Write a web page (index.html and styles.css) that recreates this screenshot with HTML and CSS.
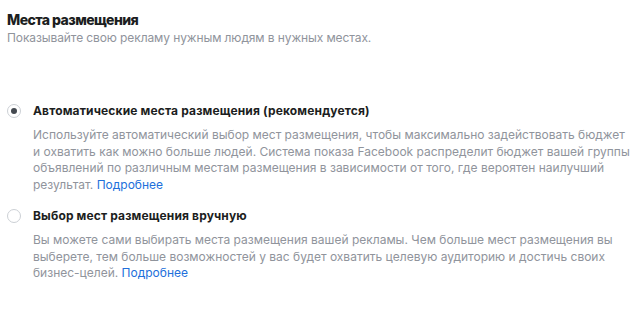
FILE: index.html
```html
<!DOCTYPE html>
<html lang="ru">
<head>
<meta charset="utf-8">
<link rel="stylesheet" href="styles.css">
</head>
<body>
<section class="placements">
  <header class="head">
    <div class="title">Места размещения</div>
    <p class="subtitle">Показывайте свою рекламу нужным людям в нужных местах.</p>
  </header>
  <div class="options">
    <div class="option">
      <div class="option-row">
        <span class="radio checked"></span>
        <span class="option-title">Автоматические места размещения (рекомендуется)</span>
      </div>
      <p class="desc">Используйте автоматический выбор мест размещения, чтобы максимально задействовать бюджет и охватить как можно больше людей. Система показа Facebook распределит бюджет вашей группы объявлений по различным местам размещения в зависимости от того, где вероятен наилучший результат. <a class="link" href="#">Подробнее</a></p>
    </div>
    <div class="option">
      <div class="option-row">
        <span class="radio"></span>
        <span class="option-title">Выбор мест размещения вручную</span>
      </div>
      <p class="desc">Вы можете сами выбирать места размещения вашей рекламы. Чем больше мест размещения вы выберете, тем больше возможностей у вас будет охватить целевую аудиторию и достичь своих бизнес-целей. <a class="link" href="#">Подробнее</a></p>
    </div>
  </div>
</section>
</body>
</html>
```
FILE: styles.css
```css
* { box-sizing: border-box; }
html, body { margin: 0; padding: 0; background: #fff; }
body {
  font-family: Inter, "Liberation Sans", Arial, sans-serif;
  color: #1c1e21;
  -webkit-font-smoothing: antialiased;
}
.placements {
  padding: 11px 7px 0 7px;
  width: 643px;
}
.head { display: flex; flex-direction: column; gap: 1px; }
.title {
  margin: 0;
  font-size: 14px;
  line-height: 18px;
  font-weight: 800;
  letter-spacing: -0.55px;
  color: #1c1e21;
}
.subtitle {
  margin: 0;
  font-size: 12px;
  line-height: 16px;
  letter-spacing: -0.1px;
  color: #90949c;
}
.options {
  display: flex;
  flex-direction: column;
  gap: 15px;
  margin-top: 57px;
}
.option { display: flex; flex-direction: column; gap: 8px; }
.option-row { display: flex; align-items: center; gap: 12px; }
.radio {
  width: 14px;
  height: 14px;
  border-radius: 50%;
  border: 1px solid #ccd0d5;
  background: #fff;
  display: flex;
  align-items: center;
  justify-content: center;
  flex: none;
}
.radio.checked::after {
  content: "";
  width: 6px;
  height: 6px;
  border-radius: 50%;
  background: #444950;
}
.option-title {
  font-size: 12px;
  line-height: 16px;
  font-weight: 700;
  letter-spacing: 0.15px;
  color: #1c1e21;
}
.desc {
  margin: 0 0 0 26px;
  font-size: 12px;
  line-height: 16.5px;
  color: #90949c;
  max-width: 600px;
}
.link { color: #216fdb; text-decoration: none; }
```
